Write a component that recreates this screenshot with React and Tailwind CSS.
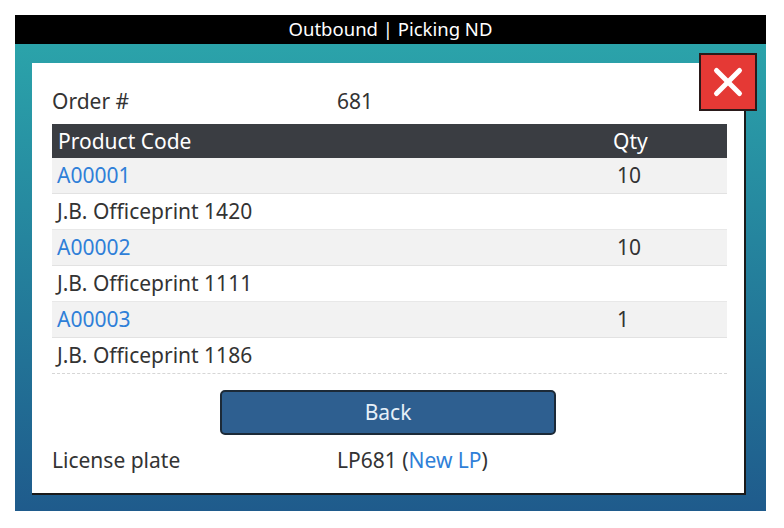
import { X } from 'lucide-react'

const ROWS = [
  { code: 'A00001', name: 'J.B. Officeprint 1420', qty: 10 },
  { code: 'A00002', name: 'J.B. Officeprint 1111', qty: 10 },
  { code: 'A00003', name: 'J.B. Officeprint 1186', qty: 1 },
]

export default function App() {
  return (
    <div className="w-[784px] h-[528px] bg-white p-[15px] pr-[18px] pb-[17px] font-['Noto_Sans',sans-serif] text-[#333]">
      <div className="flex flex-col w-[751px] h-[496px]">
        {/* Title bar */}
        <div className="h-[29px] bg-black text-white text-[18.5px] leading-none flex items-center justify-center shrink-0">
          Outbound | Picking ND
        </div>

        {/* Body */}
        <div className="relative flex-1 bg-gradient-to-b from-[#2ba3aa] to-[#1f5b8c] pt-[19px] pl-[17px] pr-[20px] pb-[16px]">
          <div className="w-[714px] h-[432px] bg-white border-r-2 border-b-2 border-[#1a1a1a] px-[20px] pt-[24px] text-[21px] leading-none">
            {/* Order */}
            <div className="flex h-[28px] items-center">
              <span className="w-[285px]">Order #</span>
              <span>681</span>
            </div>

            {/* Table */}
            <div className="w-[675px] mt-[9px]">
              <div className="flex h-[34px] items-center bg-[#3a3d42] text-white px-[6px]">
                <span className="flex-1">Product Code</span>
                <span className="w-[108px]">Qty</span>
              </div>
              {ROWS.map((r, i) => (
                <div key={r.code}>
                  <div className="flex h-[36px] items-center bg-[#f2f2f2] border-b border-[#e2e2e2] px-[5px]">
                    <span className="flex-1 text-[#2f7fd8]">{r.code}</span>
                    <span className="w-[105px]">{r.qty}</span>
                  </div>
                  <div
                    className={`flex h-[36px] items-center px-[5px] ${
                      i === ROWS.length - 1 ? 'border-b border-dashed border-[#d6d6d6]' : 'border-b border-[#e8e8e8]'
                    }`}
                  >
                    {r.name}
                  </div>
                </div>
              ))}
            </div>

            {/* Back button */}
            <div className="flex justify-center mt-[16px]">
              <button className="w-[336px] h-[45px] bg-[#2e5f90] border-2 border-[#1c2a38] rounded-[5px] text-[#e6f0f8] text-[21px] leading-none">
                Back
              </button>
            </div>

            {/* License plate */}
            <div className="flex h-[28px] items-center mt-[11px]">
              <span className="w-[285px]">License plate</span>
              <span>
                LP681 (<span className="text-[#2f7fd8]">New LP</span>)
              </span>
            </div>
          </div>

          {/* Close button */}
          <button className="absolute top-[9px] right-[9px] w-[58px] h-[58px] bg-[#e53935] border-2 border-[#2a1a1a] flex items-center justify-center">
            <X size={46} strokeWidth={2.6} className="text-white" />
          </button>
        </div>
      </div>
    </div>
  )
}
